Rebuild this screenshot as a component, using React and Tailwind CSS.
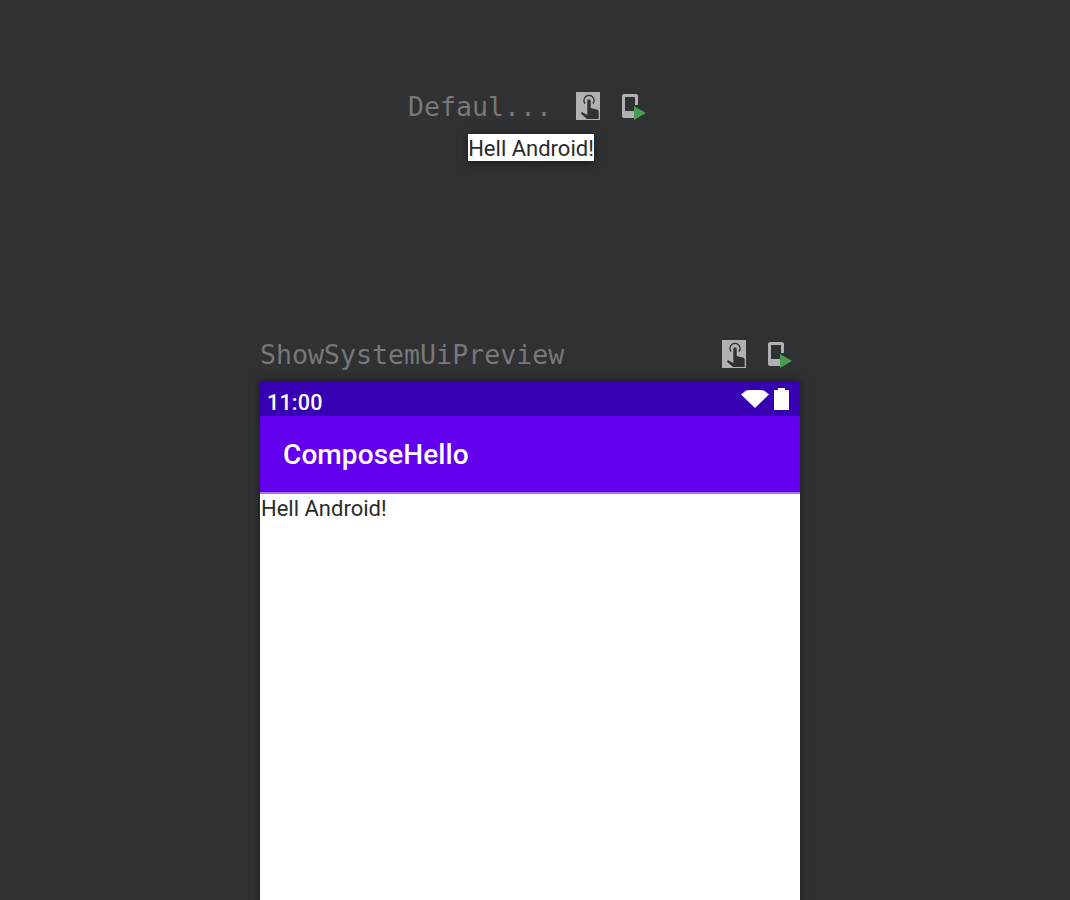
const TouchIcon = () => (
  <svg width="24" height="28" viewBox="0 0 24 28" className="block">
    <rect width="24" height="28" fill="#afb1b3" />
    <path d="M9 11.500a5 5 0 1 1 8 0" fill="none" stroke="#2f3133" strokeWidth="1.500" />
    <path d="M11.300 9a1.700 1.700 0 0 1 3.400 0v7l6 1.500c1.200.3 2 1.200 2 2.500v7H11l-5.700-5c-.9-1 .4-2.200 1.500-1.500l4.500 2.500z" fill="#2f3133" />
  </svg>
);
const RunIcon = () => (
  <svg width="24" height="28" viewBox="0 0 24 28" className="block">
    <path d="M2 2h12c1.200 0 2 .8 2 2v9h-3V5H3v14h9v7H2c-1.200 0-2-.8-2-2V4c0-1.200.8-2 2-2z" fill="#afb1b3" />
    <path d="M12 14l12 7-12 7z" fill="#499c54" />
  </svg>
);
const mono = "font-['DejaVu_Sans_Mono',monospace] text-[26.6px] leading-[32px] text-[#777879] whitespace-nowrap";
const roboto = "font-['Roboto',sans-serif]";

export default function App() {
  return (
    <div className="h-[900px] overflow-hidden bg-[#2f3133] pl-[260px] pt-[91px]">
      <div className="flex w-[540px] flex-col">
        <div className="ml-[148px] flex h-[32px] items-start">
          <span className={`${mono} w-[168px]`}>Defaul...</span>
          <div className="flex gap-[22px] pt-px">
            <TouchIcon />
            <RunIcon />
          </div>
        </div>
        <div className={`${roboto} ml-[208px] mt-[11px] flex h-[27px] w-[126px] items-center justify-center bg-white pt-[2px] text-[22px] leading-[27px] text-[#2b2b2b] shadow-[0_2px_8px_rgba(0,0,0,0.5)] whitespace-nowrap`}>
          Hell Android!
        </div>
        <div className="mt-[178px] flex h-[32px] items-start justify-between">
          <span className={mono}>ShowSystemUiPreview</span>
          <div className="flex gap-[22px] pr-[8px] pt-px">
            <TouchIcon />
            <RunIcon />
          </div>
        </div>
        <div className="mt-[10px] flex h-[600px] flex-col bg-white shadow-[0_0_8px_rgba(0,0,0,0.5)]">
          <div className="flex h-[35px] items-start justify-between bg-[#3700b3] pl-[7px] pr-[11px]">
            <span className={`${roboto} pt-[9px] text-[21.5px] font-medium leading-[26px] tracking-[0.2px] text-white`}>11:00</span>
            <div className="flex items-start gap-[5px] pt-[7px]">
              <svg width="28" height="18" viewBox="0 0 28 18" className="mt-[2px] block"><path d="M0 4.500L5 0.500Q14 -1 23 0.500L28 4.500L14 18z" fill="#fff" /></svg>
              <svg width="15" height="22" viewBox="0 0 15 22" className="block"><path d="M4 0h7v2h4v20H0V2h4z" fill="#fff" /></svg>
            </div>
          </div>
          <div className="flex h-[76px] items-center bg-[#6200ee] pl-[23px] pt-[2px]">
            <span className={`${roboto} text-[28px] font-medium leading-[32px] tracking-[0.1px] text-white`}>ComposeHello</span>
          </div>
          <div className="h-[2px] bg-[#a974f5]" />
          <div className={`${roboto} pl-px pt-px text-[22px] leading-[27px] text-[#2b2b2b]`}>Hell Android!</div>
        </div>
      </div>
    </div>
  );
}
